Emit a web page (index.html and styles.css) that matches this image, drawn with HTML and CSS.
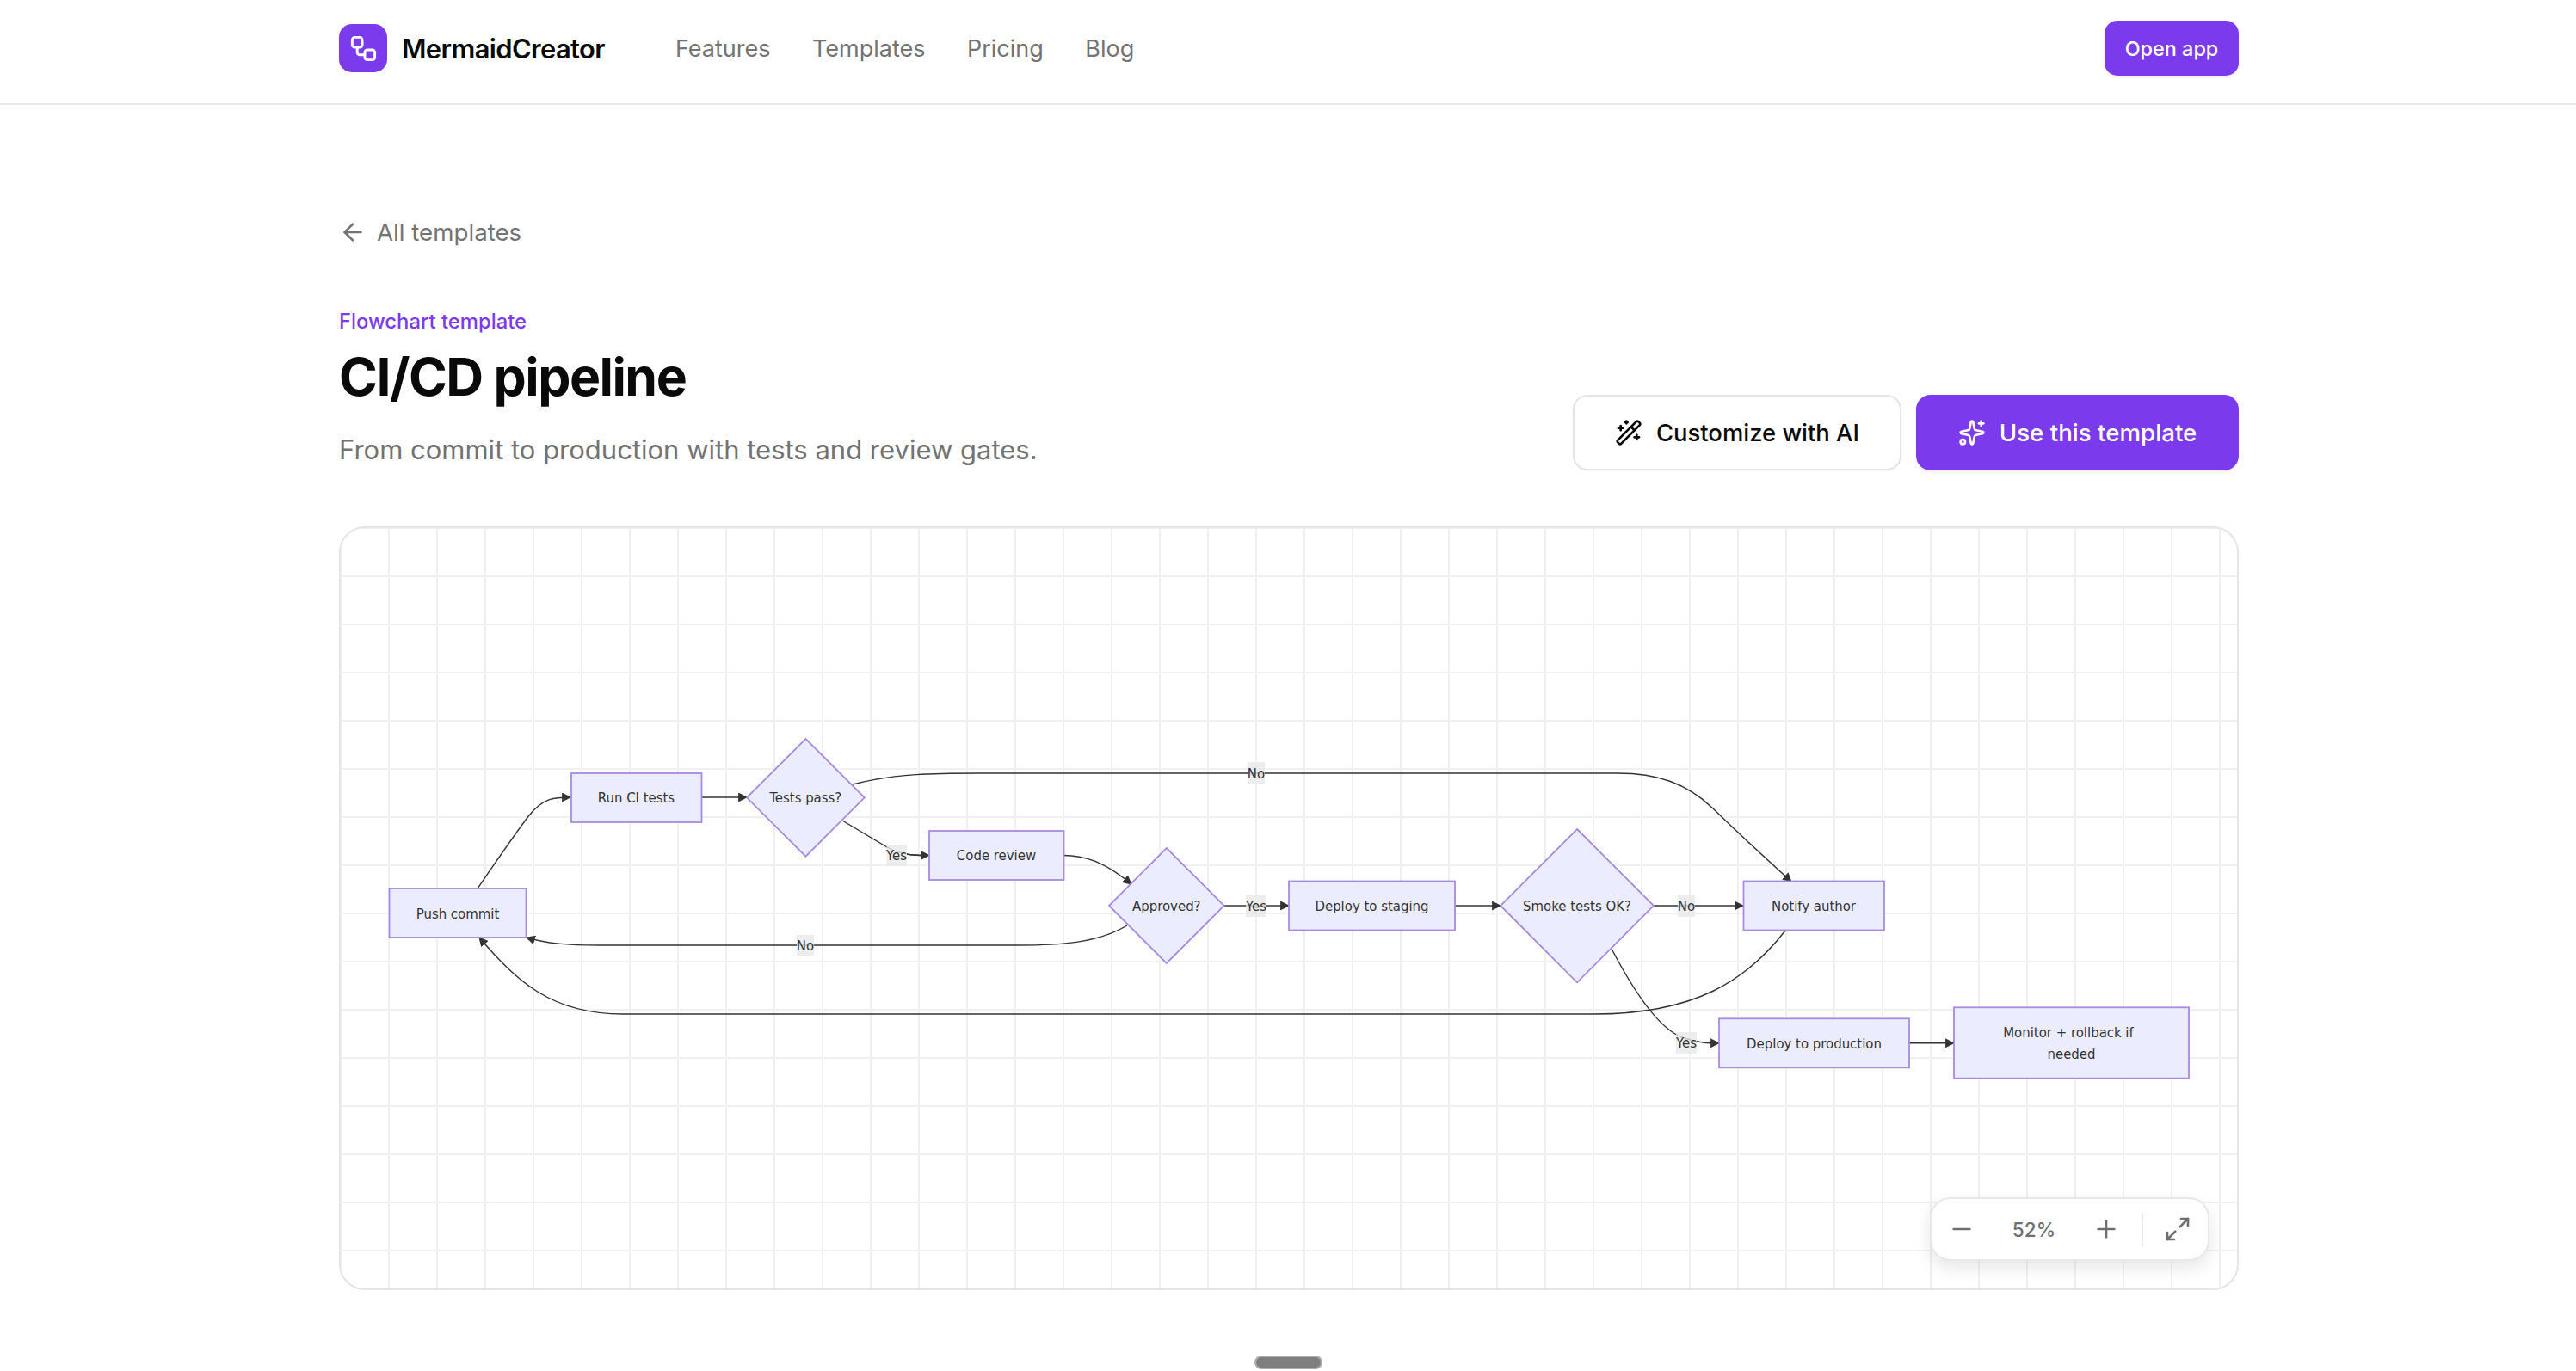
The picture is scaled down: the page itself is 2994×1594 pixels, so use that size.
FILE: index.html
```html
<!DOCTYPE html>
<html lang="en">
  <head>
    <meta charset="UTF-8" />
    <meta name="viewport" content="width=device-width, initial-scale=1.0" />
    <title>CI/CD pipeline - MermaidCreator</title>
    <link rel="stylesheet" href="styles.css">
  </head>
  <body>
    <header class="site-header">
      <div class="wrap header-row">
        <a class="brand">
          <span class="brand-mark">
            <svg class="icon brand-icon" viewBox="0 0 24 24">
              <rect x="3" y="3" width="8" height="8" rx="2" />
              <path d="M7 11v4a2 2 0 0 0 2 2h4" />
              <rect x="13" y="13" width="8" height="8" rx="2" />
            </svg>
          </span>
          <span class="brand-name">MermaidCreator</span>
        </a>
        <nav class="nav">
          <a class="nav-link">Features</a>
          <a class="nav-link">Templates</a>
          <a class="nav-link">Pricing</a>
          <a class="nav-link">Blog</a>
        </nav>
        <a class="open-app">Open app</a>
      </div>
    </header>

    <main class="wrap main">
      <a class="back-link">
        <svg class="icon" viewBox="0 0 24 24">
          <path d="m12 19-7-7 7-7" />
          <path d="M19 12H5" />
        </svg>
        All templates
      </a>

      <div class="eyebrow">Flowchart template</div>
      <h1 class="title">CI/CD pipeline</h1>

      <div class="intro-row">
        <p class="intro">From commit to production with tests and review gates.</p>
        <div class="actions">
          <a class="button button--ghost">
            <svg class="icon" viewBox="0 0 24 24">
              <path d="m21.64 3.64-1.28-1.28a1.21 1.21 0 0 0-1.72 0L2.36 18.64a1.21 1.21 0 0 0 0 1.72l1.28 1.28a1.2 1.2 0 0 0 1.72 0L21.64 5.36a1.2 1.2 0 0 0 0-1.72" />
              <path d="m14 7 3 3" />
              <path d="M5 6v4" />
              <path d="M19 14v4" />
              <path d="M10 2v2" />
              <path d="M7 8H3" />
              <path d="M21 16h-4" />
              <path d="M11 3H9" />
            </svg>
            Customize with AI
          </a>
          <a class="button button--primary">
            <svg class="icon" viewBox="0 0 24 24">
              <path d="M11.017 2.814a1 1 0 0 1 1.966 0l1.051 5.558a2 2 0 0 0 1.594 1.594l5.558 1.051a1 1 0 0 1 0 1.966l-5.558 1.051a2 2 0 0 0-1.594 1.594l-1.051 5.558a1 1 0 0 1-1.966 0l-1.051-5.558a2 2 0 0 0-1.594-1.594l-5.558-1.051a1 1 0 0 1 0-1.966l5.558-1.051a2 2 0 0 0 1.594-1.594z" />
              <path d="M20 2v4" />
              <path d="M22 4h-4" />
              <circle cx="4" cy="20" r="2" />
            </svg>
            Use this template
          </a>
        </div>
      </div>

      <section class="canvas">
        <svg class="diagram" viewBox="394 612 2208 888">
          <defs>
            <marker id="arrow" viewBox="0 0 10 10" refX="9" refY="5" markerUnits="userSpaceOnUse" markerWidth="11" markerHeight="11" orient="auto">
              <path class="arrow-head" d="M0 0L10 5L0 10z" />
            </marker>
          </defs>

          <!-- edges -->
          <path class="edge" marker-end="url(#arrow)" d="M555 1033C580 997 598 970 615 948C632 927 645 927 663 927" />
          <path class="edge" marker-end="url(#arrow)" d="M815 927H868" />
          <path class="edge" marker-end="url(#arrow)" d="M991 912C1040 899 1090 899 1136 899H1880C1925 899 1960 910 1991 940C2030 978 2060 1005 2082 1025" />
          <path class="edge" d="M979 954L1031 985C1045 993 1060 994.5 1070 994.5" />
          <path class="edge" marker-end="url(#arrow)" d="M1054 993C1060 994.5 1070 994.5 1080 994.5" />
          <path class="edge" marker-end="url(#arrow)" d="M1236 994.5C1262 994.5 1285 1003 1315 1028" />
          <path class="edge" marker-end="url(#arrow)" d="M1310 1076C1275 1097 1230 1099 1184 1099H697C660 1099 635 1097 612 1090" />
          <path class="edge" marker-end="url(#arrow)" d="M1423 1053H1498" />
          <path class="edge" marker-end="url(#arrow)" d="M1691 1053H1744" />
          <path class="edge" marker-end="url(#arrow)" d="M1922 1053H2026" />
          <path class="edge" marker-end="url(#arrow)" d="M2075 1082C2030 1140 1970 1179 1853 1179H724C640 1179 600 1140 557 1090" />
          <path class="edge" marker-end="url(#arrow)" d="M1873 1103C1895 1145 1925 1195 1955 1206C1975 1212.8 1985 1212.8 1998 1212.8" />
          <path class="edge" marker-end="url(#arrow)" d="M2219 1212.8H2271" />

          <!-- nodes -->
          <rect class="node" x="452.5" y="1033" width="159" height="57" />
          <text class="node-label" x="532" y="1062">Push commit</text>
          <rect class="node" x="664" y="899" width="151.5" height="57" />
          <text class="node-label" x="739.5" y="927.5">Run CI tests</text>
          <polygon class="node" points="936.4,859 1004.8,927.3 936.4,995.7 868,927.3" />
          <text class="node-label" x="936.4" y="927.5">Tests pass?</text>
          <rect class="node" x="1080" y="966" width="156.5" height="57" />
          <text class="node-label" x="1158" y="994.5">Code review</text>
          <polygon class="node" points="1355.8,986 1422.7,1053 1355.8,1120 1289,1053" />
          <text class="node-label" x="1355.8" y="1053">Approved?</text>
          <rect class="node" x="1498" y="1024.5" width="193" height="57" />
          <text class="node-label" x="1594.5" y="1053">Deploy to staging</text>
          <polygon class="node" points="1833,964 1922,1053 1833,1142.3 1744,1053" />
          <text class="node-label" x="1833" y="1053">Smoke tests OK?</text>
          <rect class="node" x="2026.5" y="1024.5" width="163.5" height="57" />
          <text class="node-label" x="2108" y="1053">Notify author</text>
          <rect class="node" x="1998" y="1184.3" width="221" height="57" />
          <text class="node-label" x="2108.5" y="1213">Deploy to production</text>
          <rect class="node" x="2271" y="1171.3" width="273" height="82.4" />
          <text class="node-label" x="2404" y="1200">Monitor + rollback if</text>
          <text class="node-label" x="2407.5" y="1225.7">needed</text>

          <!-- edge labels -->
          <rect class="edge-tag" x="1450" y="886" width="20" height="26" />
          <text class="node-label" x="1460" y="899">No</text>
          <rect class="edge-tag" x="1030.5" y="982" width="23.5" height="25" />
          <text class="node-label" x="1042" y="994.5">Yes</text>
          <rect class="edge-tag" x="926" y="1087" width="20" height="25" />
          <text class="node-label" x="936" y="1099.5">No</text>
          <rect class="edge-tag" x="1448" y="1041" width="24" height="25" />
          <text class="node-label" x="1460" y="1053">Yes</text>
          <rect class="edge-tag" x="1950" y="1040" width="20" height="26" />
          <text class="node-label" x="1960" y="1053">No</text>
          <rect class="edge-tag" x="1948" y="1200" width="24" height="25" />
          <text class="node-label" x="1960" y="1212.8">Yes</text>
        </svg>

        <div class="zoom-bar">
          <svg class="icon" viewBox="0 0 24 24"><path d="M5 12h14" /></svg>
          <span class="zoom-value">52%</span>
          <svg class="icon" viewBox="0 0 24 24"><path d="M5 12h14" /><path d="M12 5v14" /></svg>
          <span class="zoom-divider"></span>
          <svg class="icon" viewBox="0 0 24 24">
            <path d="M15 3h6v6" />
            <path d="m21 3-7 7" />
            <path d="m3 21 7-7" />
            <path d="M9 21H3v-6" />
          </svg>
        </div>
      </section>
    </main>

    <div class="scroll-pill"></div>
  </body>
</html>
```

FILE: styles.css
```css
* {
  box-sizing: border-box;
}

body {
  margin: 0;
  height: 1594px;
  overflow: hidden;
  background: #ffffff;
  color: #0a0a0a;
  font-family: Inter, "Noto Sans", sans-serif;
}

.wrap {
  width: 2208px;
  margin-left: 394px;
}

.icon {
  width: 32px;
  height: 32px;
  flex: none;
  fill: none;
  stroke: currentColor;
  stroke-width: 2;
  stroke-linecap: round;
  stroke-linejoin: round;
}

/* header */
.site-header {
  height: 122px;
  border-bottom: 2px solid #e8e8e8;
}

.header-row {
  height: 112px;
  display: flex;
  align-items: center;
}

.brand {
  display: flex;
  align-items: center;
  gap: 17px;
}

.brand-mark {
  width: 56px;
  height: 56px;
  border-radius: 15px;
  background: #7c3aed;
  color: #ffffff;
  display: flex;
  align-items: center;
  justify-content: center;
}

.brand-icon {
  width: 35px;
  height: 35px;
}

.brand-name {
  font-size: 30.9px;
  font-weight: 600;
  letter-spacing: -0.02em;
}

.nav {
  display: flex;
  gap: 48.5px;
  margin-left: 82px;
}

.nav-link {
  font-size: 27px;
  color: #737373;
}

.open-app {
  margin-left: auto;
  width: 156px;
  height: 64px;
  border-radius: 15px;
  background: #7c3aed;
  color: #ffffff;
  font-size: 23.4px;
  font-weight: 500;
  display: flex;
  align-items: center;
  justify-content: center;
  box-shadow: 0 2px 4px rgba(0, 0, 0, 0.08);
}

/* title block */
.main {
  padding-top: 128px;
}

.back-link {
  display: flex;
  align-items: center;
  gap: 12px;
  height: 40px;
  font-size: 27.7px;
  color: #737373;
}

.eyebrow {
  margin-top: 64px;
  line-height: 40px;
  font-size: 23.8px;
  font-weight: 500;
  color: #7c3aed;
}

.title {
  margin: 10px 0 0;
  line-height: 68px;
  font-size: 60.7px;
  font-weight: 700;
  letter-spacing: -0.025em;
}

.intro-row {
  display: flex;
  align-items: flex-end;
  justify-content: space-between;
  margin-top: 27px;
}

.intro {
  margin: 0;
  line-height: 48px;
  font-size: 31px;
  color: #737373;
}

.actions {
  display: flex;
  gap: 17px;
  margin-top: -40px;
}

.button {
  height: 88px;
  border-radius: 17px;
  display: flex;
  align-items: center;
  justify-content: center;
  gap: 16px;
  font-size: 27.4px;
  font-weight: 500;
}

.button--ghost {
  width: 382px;
  border: 2px solid #e5e5e5;
  background: #ffffff;
  box-shadow: 0 1px 2px rgba(0, 0, 0, 0.04);
}

.button--primary {
  width: 375px;
  font-size: 27.7px;
  background: #7c3aed;
  color: #ffffff;
  box-shadow: 0 2px 4px rgba(0, 0, 0, 0.08);
}

/* diagram canvas */
.canvas {
  position: relative;
  height: 888px;
  margin-top: 65px;
  border: 2px solid #e5e5e5;
  border-radius: 30px;
  overflow: hidden;
  background-color: #ffffff;
  background-image: linear-gradient(to right, #f0f0f0 2px, transparent 2px),
    linear-gradient(to bottom, #f0f0f0 2px, transparent 2px);
  background-size: 56px 56px;
  background-position: 55px 55px;
}

.diagram {
  position: absolute;
  left: -2px;
  top: -2px;
  width: 2208px;
  height: 888px;
}

.edge {
  fill: none;
  stroke: #333333;
  stroke-width: 1.4;
}

.arrow-head {
  fill: #333333;
}

.node {
  fill: #ececff;
  stroke: #a78be0;
  stroke-width: 1.8;
}

.node-label {
  font-family: "DejaVu Sans", Verdana, sans-serif;
  font-size: 16.6px;
  font-stretch: condensed;
  fill: #333333;
  text-anchor: middle;
  dominant-baseline: central;
}

.edge-tag {
  fill: #e8e8e8;
  fill-opacity: 0.8;
}

/* zoom controls */
.zoom-bar {
  position: absolute;
  right: 32px;
  bottom: 32px;
  width: 325px;
  height: 74px;
  display: flex;
  align-items: center;
  padding-left: 19px;
  border: 2px solid #e8e8e8;
  border-radius: 24px;
  background: #ffffff;
  color: #6f6f6f;
  box-shadow: 0 8px 20px rgba(0, 0, 0, 0.1);
}

.zoom-value {
  width: 136px;
  text-align: center;
  font-size: 22.6px;
  font-weight: 500;
}

.zoom-divider {
  width: 2px;
  height: 39px;
  margin: 0 24px 0 25px;
  background: #e8e8e8;
}

.scroll-pill {
  position: absolute;
  left: 1458px;
  top: 1576px;
  width: 79px;
  height: 16px;
  border-radius: 8px;
  background: #7f7f7f;
  border: 2px solid #adadad;
}
```
